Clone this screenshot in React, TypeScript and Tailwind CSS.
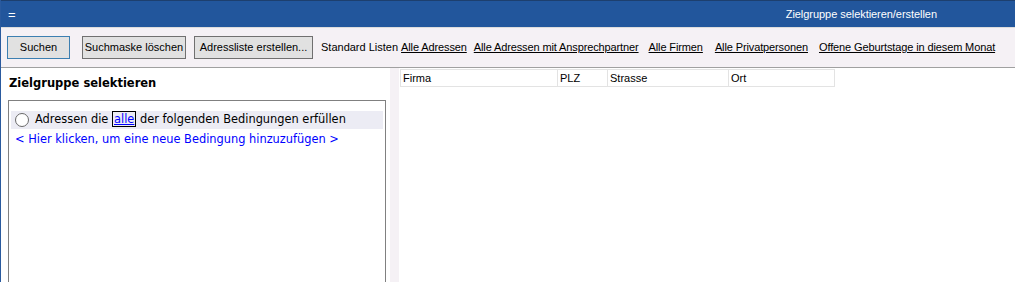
import React from "react";

const LINKS = [
  { label: "Alle Adressen", ml: "ml-[3px]" },
  { label: "Alle Adressen mit Ansprechpartner", ml: "ml-[7px]" },
  { label: "Alle Firmen", ml: "ml-[10px]" },
  { label: "Alle Privatpersonen", ml: "ml-[12px]" },
  { label: "Offene Geburtstage in diesem Monat", ml: "ml-[11px]" },
];

const COLUMNS = [
  { name: "Firma", w: "w-[158px]" },
  { name: "PLZ", w: "w-[50px]" },
  { name: "Strasse", w: "w-[121px]" },
  { name: "Ort", w: "w-[106px]" },
];

const Btn = ({ label, focused, w }: { label: string; focused?: boolean; w: string }) => (
  <button
    className={`h-[23px] ${w} shrink-0 whitespace-nowrap border ${
      focused ? "border-[#3c7fb1]" : "border-[#707070]"
    } bg-[#e1e1e1] text-[11px] text-black leading-none`}
  >
    {label}
  </button>
);

export default function App() {
  return (
    <div className="w-[1015px] h-[282px] overflow-hidden bg-white border-l border-[#2a5a9e] flex flex-col font-['Liberation_Sans',Arial,sans-serif]">
      {/* title bar */}
      <div className="h-[27px] shrink-0 bg-[#22569c] border-t border-[#1d3f6e] flex items-center text-white">
        <span className="ml-[7px] text-[13px] leading-none">=</span>
        <span className="ml-auto mr-[78px] text-[11px] tracking-[-0.05px] whitespace-nowrap">
          Zielgruppe selektieren/erstellen
        </span>
      </div>

      {/* toolbar */}
      <div className="h-[41px] shrink-0 bg-[#f5f1f5] border-t border-[#dcdcdc] border-b border-b-[#a0a0a0] flex items-center pl-[6px] text-[11px] text-black whitespace-nowrap">
        <Btn label="Suchen" focused w="w-[63px]" />
        <div className="w-[12px] shrink-0" />
        <Btn label="Suchmaske löschen" w="w-[104px]" />
        <div className="w-[8px] shrink-0" />
        <Btn label="Adressliste erstellen..." w="w-[119px]" />
        <span className="ml-[8px] shrink-0">Standard Listen</span>
        {LINKS.map((l) => (
          <a
            key={l.label}
            className={`${l.ml} shrink-0 underline tracking-[-0.12px] text-black cursor-pointer`}
          >
            {l.label}
          </a>
        ))}
      </div>

      {/* main area */}
      <div className="flex flex-1 min-h-0">
        <div className="w-[389px] shrink-0 bg-white flex flex-col font-['DejaVu_Sans',Verdana,sans-serif]">
          <div className="h-[32px] flex items-center pl-[8px] text-[11.5px] font-bold text-black">
            Zielgruppe selektieren
          </div>
          <div className="ml-[7px] w-[378px] flex-1 border-[1.5px] border-b-0 border-[#808080] pt-[10px] px-[2px] text-[11.4px]">
            <div className="h-[18px] bg-[#ececf4] flex items-center pl-[4px]">
              <span className="w-[14px] h-[14px] shrink-0 rounded-full border border-[#6a6a6a] bg-white" />
              <span className="ml-[6px] text-black whitespace-nowrap">
                Adressen die{" "}
                <span className="border border-black px-[1px] text-[#0000ff] underline">alle</span>{" "}
                der folgenden Bedingungen erfüllen
              </span>
            </div>
            <div className="pl-[4px] mt-[2px] text-[#0000ff] whitespace-nowrap">
              &lt; Hier klicken, um eine neue Bedingung hinzuzufügen &gt;
            </div>
          </div>
        </div>
        <div className="w-[9px] shrink-0 bg-[#f5f1f5]" />
        <div className="flex-1 bg-white pt-[1px] pl-[1px]">
          <div className="flex h-[18px] text-[11px] text-black">
            {COLUMNS.map((c, i) => (
              <div
                key={c.name}
                className={`${c.w} border border-[#e3e3e3] ${
                  i > 0 ? "border-l-0" : ""
                } flex items-center pl-[2px]`}
              >
                {c.name}
              </div>
            ))}
          </div>
        </div>
      </div>
    </div>
  );
}
